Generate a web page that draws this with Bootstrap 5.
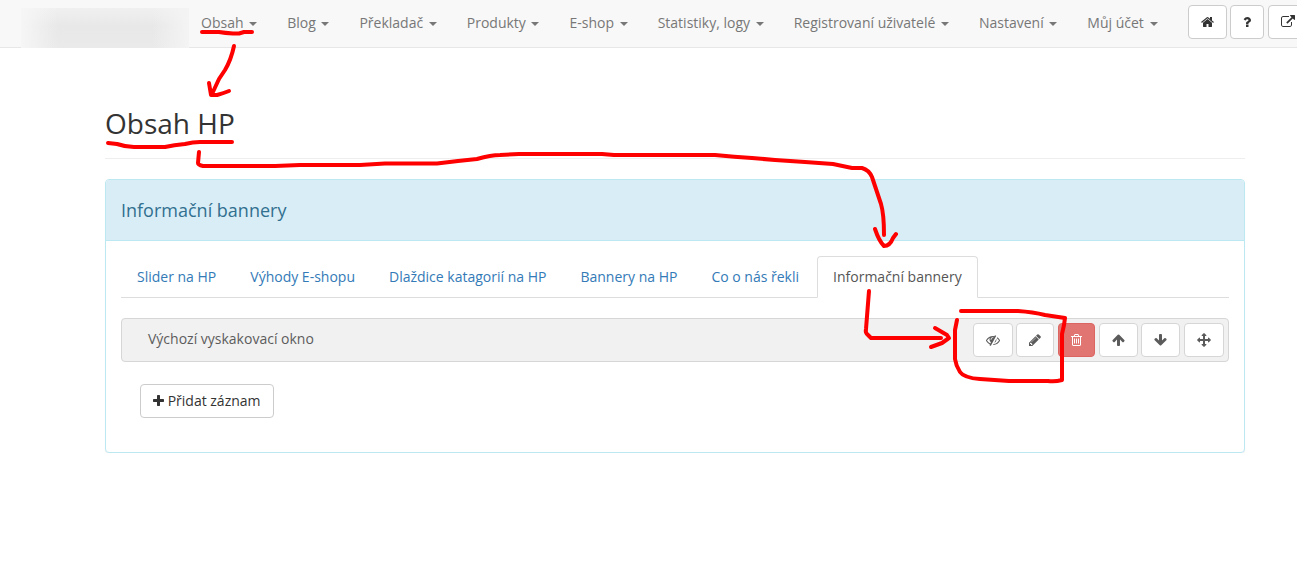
<!DOCTYPE html>
<html lang="cs">
<head>
<meta charset="utf-8">
<meta name="viewport" content="width=device-width, initial-scale=1">
<title>Obsah HP</title>
<link href="https://cdn.jsdelivr.net/npm/bootstrap@5.3.0/dist/css/bootstrap.min.css" rel="stylesheet">
<style>
body { font: 14px/20px "Open Sans", "Noto Sans", sans-serif; color: #333; background: #fff; overflow-x: hidden; }
.topbar { height: 48px; background: #f8f8f8; border-bottom: 1px solid #e7e7e7; padding-left: 21px; }
.logo-blur { width: 168px; height: 40px; margin: 8px -3px 0 0; background: linear-gradient(90deg, #f6f6f6, rgba(246,246,246,0) 22%, rgba(246,246,246,0) 78%, #f4f4f4), linear-gradient(#f0f0f0, #e8e8e8 45%, #eaeaea); }
.topbar .nav-link { color: #777; padding: 13px 15px 15px; line-height: 20px; white-space: nowrap; }
.topbar .dropdown-toggle::after { border-top: 4px solid; border-right: 4px solid transparent; border-left: 4px solid transparent; border-bottom: 0; margin-left: 2px; vertical-align: middle; }
.btn-line { --bs-btn-color: #333; --bs-btn-bg: #fff; --bs-btn-border-color: #ccc; --bs-btn-hover-bg: #e6e6e6; --bs-btn-hover-border-color: #adadad; }
.btn-del { --bs-btn-color: #fff; --bs-btn-bg: #d9534f; --bs-btn-border-color: #d43f3a; --bs-btn-hover-color: #fff; --bs-btn-hover-bg: #c9302c; }
.btn-line, .btn-del { --bs-btn-padding-x: 12px; --bs-btn-padding-y: 6px; --bs-btn-font-size: 14px; --bs-btn-line-height: 20px; --bs-btn-border-radius: 4px; }
.ico { height: 14px; fill: currentColor; vertical-align: -2px; }
.tools { padding: 5px 0 0 15px; white-space: nowrap; }
.page { padding: 0 52px 0 105px; }
.page-title { font-size: 28px; line-height: 32px; font-weight: 400; margin: 59px 0 20px; padding-bottom: 19px; border-bottom: 1px solid #eee; }
.panel { --bs-card-border-color: #bce8f1; --bs-card-border-radius: 4px; --bs-card-inner-border-radius: 3px; --bs-card-cap-bg: #d9edf7; --bs-card-cap-padding-x: 15px; --bs-card-cap-padding-y: 20px; box-shadow: 0 1px 1px rgba(0,0,0,.05); }
.panel-heading { color: #31708f; }
.panel-heading h2 { font-size: 18px; line-height: 20px; font-weight: 400; margin: 0; }
.panel-content { padding: 15px 15px 34px; }
.sections { --bs-nav-tabs-border-color: #ddd; --bs-nav-tabs-border-radius: 4px; --bs-nav-link-padding-x: 15px; --bs-nav-link-padding-y: 10px; --bs-nav-link-color: #337ab7; --bs-nav-tabs-link-active-color: #555; --bs-nav-tabs-link-active-border-color: #ddd #ddd #fff; column-gap: 2px; }
.record { margin-top: 20px; height: 44px; padding: 0 4px 0 26px; background: #eee; border: 1px solid #ccc; border-radius: 4px; opacity: .8; }
.record-name { padding-bottom: 3px; }
.add-row { padding: 22px 19px 0; }
.marks { left: 0; top: 0; fill: none; stroke: red; stroke-width: 4; stroke-linecap: round; stroke-linejoin: round; pointer-events: none; }
</style>
</head>
<body class="position-relative">
<svg width="0" height="0" class="d-none" aria-hidden="true">
  <symbol id="i-home" viewBox="64 0 1664 1792"><path d="M1472 992v480q0 26-19 45t-45 19h-384v-384h-256v384h-384q-26 0-45-19t-19-45v-480q0-1 .5-3t.5-3l575-474 575 474q1 2 1 6zm223-69l-62 74q-8 9-21 11h-3q-13 0-21-7l-692-577-692 577q-12 8-24 7-13-2-21-11l-62-74q-8-10-7-23.5t11-21.5l719-599q32-26 76-26t76 26l244 204v-195q0-14 9-23t23-9h192q14 0 23 9t9 23v408l219 182q10 8 11 21.5t-7 23.5z"/></symbol>
  <symbol id="i-question" viewBox="384 0 1024 1792"><path d="M1088 1256v240q0 16-12 28t-28 12h-240q-16 0-28-12t-12-28v-240q0-16 12-28t28-12h240q16 0 28 12t12 28zm316-600q0 54-15.5 101t-35 76.5-55 59.5-57.5 43.5-61 35.5q-41 23-68.5 65t-27.5 67q0 17-12 32.5t-28 15.5h-240q-15 0-25.5-18.5t-10.5-37.5v-45q0-83 65-156.5t143-108.5q59-27 84-56t25-76q0-42-46.5-74t-107.5-32q-65 0-108 29-35 25-107 115-13 16-31 16-12 0-25-8l-164-125q-13-10-15.5-25t5.5-28q160-266 464-266 80 0 161 31t146 83 106 127.5 41 158.5z"/></symbol>
  <symbol id="i-external" viewBox="0 0 1792 1792"><path d="M1408 928v320q0 119-84.5 203.5t-203.5 84.5h-832q-119 0-203.5-84.5t-84.5-203.5v-832q0-119 84.5-203.5t203.5-84.5h704q14 0 23 9t9 23v64q0 14-9 23t-23 9h-704q-66 0-113 47t-47 113v832q0 66 47 113t113 47h832q66 0 113-47t47-113v-320q0-14 9-23t23-9h64q14 0 23 9t9 23zm384-864v512q0 26-19 45t-45 19-45-19l-176-176-652 652q-10 10-23 10t-23-10l-114-114q-10-10-10-23t10-23l652-652-176-176q-19-19-19-45t19-45 45-19h512q26 0 45 19t19 45z"/></symbol>
  <symbol id="i-eye-slash" viewBox="0 0 1792 1792"><path d="M555 1335l78-141q-87-63-136-159t-49-203q0-121 61-225-229 117-381 353 167 258 427 375zm389-759q0-20-14-34t-34-14q-125 0-214.5 89.5t-89.5 214.5q0 20 14 34t34 14 34-14 14-34q0-86 61-147t147-61q20 0 34-14t14-34zm363-191q0 7-1 9-106 189-316 567t-315 566l-49 89q-10 16-28 16-12 0-134-70-16-10-16-28 0-12 44-87-143-65-263.5-173t-208.5-245q-20-31-20-69t20-69q153-235 380-371t496-136q89 0 180 17l54-97q10-16 28-16 5 0 18 6t31 15.5 33 18.5 31.5 18.5 19.5 11.5q16 10 16 27zm37 447q0 139-79 253.5t-209 164.5l280-502q8 45 8 84zm448 128q0 35-20 69-39 64-109 145-150 172-347.5 267t-419.5 95l74-132q212-18 392.5-137t301.5-307q-115-179-282-294l63-112q95 64 182.5 153t144.5 184q20 34 20 69z"/></symbol>
  <symbol id="i-pencil" viewBox="128 0 1536 1792"><path d="M491 1536l91-91-235-235-91 91v107h128v128h107zm523-928q0-22-22-22-10 0-17 7l-542 542q-7 7-7 17 0 22 22 22 10 0 17-7l542-542q7-7 7-17zm-54-192l416 416-832 832h-416v-416zm683 96q0 53-37 90l-166 166-416-416 166-165q36-38 90-38 53 0 91 38l235 234q37 39 37 91z"/></symbol>
  <symbol id="i-trash" viewBox="192 0 1408 1792"><path d="M704 736v576q0 14-9 23t-23 9h-64q-14 0-23-9t-9-23v-576q0-14 9-23t23-9h64q14 0 23 9t9 23zm256 0v576q0 14-9 23t-23 9h-64q-14 0-23-9t-9-23v-576q0-14 9-23t23-9h64q14 0 23 9t9 23zm256 0v576q0 14-9 23t-23 9h-64q-14 0-23-9t-9-23v-576q0-14 9-23t23-9h64q14 0 23 9t9 23zm128 724v-948h-896v948q0 22 7 40.5t14.5 27 10.5 8.5h832q3 0 10.5-8.5t14.5-27 7-40.5zm-672-1076h448l-48-117q-7-9-17-11h-317q-10 2-17 11zm928 32v64q0 14-9 23t-23 9h-96v948q0 83-47 143.5t-113 60.5h-832q-66 0-113-58.5t-47-141.5v-952h-96q-14 0-23-9t-9-23v-64q0-14 9-23t23-9h309l70-167q15-37 54-63t79-26h320q40 0 79 26t54 63l70 167h309q14 0 23 9t9 23z"/></symbol>
  <symbol id="i-up" viewBox="64 0 1664 1792"><path d="M1675 971q0 51-37 90l-75 75q-38 38-91 38-54 0-90-38l-294-293v704q0 52-37.5 84.5t-90.5 32.5h-128q-53 0-90.5-32.5t-37.5-84.5v-704l-294 293q-36 38-90 38t-90-38l-75-75q-38-38-38-90 0-53 38-91l651-651q35-37 90-37 54 0 91 37l651 651q37 39 37 91z"/></symbol>
  <symbol id="i-down" viewBox="64 0 1664 1792"><path d="M1675 832q0 53-37 90l-651 652q-39 37-91 37-53 0-90-37l-651-652q-38-36-38-90 0-53 38-91l74-75q39-37 91-37 53 0 90 37l294 294v-704q0-52 38-90t90-38h128q52 0 90 38t38 90v704l294-294q37-37 90-37 52 0 91 37l75 75q37 39 37 91z"/></symbol>
  <symbol id="i-move" viewBox="0 0 1792 1792"><path d="M1792 896q0 26-19 45l-256 256q-19 19-45 19t-45-19-19-45v-128h-384v384h128q26 0 45 19t19 45-19 45l-256 256q-19 19-45 19t-45-19l-256-256q-19-19-19-45t19-45 45-19h128v-384h-384v128q0 26-19 45t-45 19-45-19l-256-256q-19-19-19-45t19-45l256-256q19-19 45-19t45 19 19 45v128h384v-384h-128q-26 0-45-19t-19-45 19-45l256-256q19-19 45-19t45 19l256 256q19 19 19 45t-19 45-45 19h-128v384h384v-128q0-26 19-45t45-19 45 19l256 256q19 19 19 45z"/></symbol>
  <symbol id="i-plus" viewBox="192 0 1408 1792"><path d="M1600 736v192q0 40-28 68t-68 28h-416v416q0 40-28 68t-68 28h-192q-40 0-68-28t-28-68v-416h-416q-40 0-68-28t-28-68v-192q0-40 28-68t68-28h416v-416q0-40 28-68t68-28h192q40 0 68 28t28 68v416h416q40 0 68 28t28 68z"/></symbol>
</svg>

<header class="topbar d-flex">
  <div class="logo-blur flex-shrink-0"></div>
  <nav class="nav flex-nowrap flex-shrink-0">
    <a class="nav-link dropdown-toggle" href="#">Obsah </a>
    <a class="nav-link dropdown-toggle" href="#">Blog </a>
    <a class="nav-link dropdown-toggle" href="#">Překladač </a>
    <a class="nav-link dropdown-toggle" href="#">Produkty </a>
    <a class="nav-link dropdown-toggle" href="#">E-shop </a>
    <a class="nav-link dropdown-toggle" href="#">Statistiky, logy </a>
    <a class="nav-link dropdown-toggle" href="#">Registrovaní uživatelé </a>
    <a class="nav-link dropdown-toggle" href="#">Nastavení </a>
    <a class="nav-link dropdown-toggle" href="#">Můj účet </a>
  </nav>
  <div class="tools flex-shrink-0">
    <button type="button" class="btn btn-line" aria-label="Domů"><svg class="ico" width="13"><use href="#i-home"/></svg></button>
    <button type="button" class="btn btn-line" aria-label="Nápověda"><svg class="ico" width="8"><use href="#i-question"/></svg></button>
    <button type="button" class="btn btn-line" aria-label="Otevřít web"><svg class="ico" width="14"><use href="#i-external"/></svg></button>
  </div>
</header>

<main class="page">
  <h1 class="page-title">Obsah HP</h1>
  <section class="card panel">
    <div class="card-header panel-heading"><h2>Informační bannery</h2></div>
    <div class="panel-content">
      <ul class="nav nav-tabs sections">
        <li class="nav-item"><a class="nav-link" href="#">Slider na HP</a></li>
        <li class="nav-item"><a class="nav-link" href="#">Výhody E-shopu</a></li>
        <li class="nav-item"><a class="nav-link" href="#">Dlaždice katagorií na HP</a></li>
        <li class="nav-item"><a class="nav-link" href="#">Bannery na HP</a></li>
        <li class="nav-item"><a class="nav-link" href="#">Co o nás řekli</a></li>
        <li class="nav-item"><a class="nav-link active" aria-current="page" href="#">Informační bannery</a></li>
      </ul>
      <div class="record d-flex align-items-center justify-content-between">
        <span class="record-name">Výchozí vyskakovací okno</span>
        <div class="text-nowrap">
          <button type="button" class="btn btn-line" aria-label="Skrýt"><svg class="ico" width="14"><use href="#i-eye-slash"/></svg></button>
          <button type="button" class="btn btn-line" aria-label="Upravit"><svg class="ico" width="12"><use href="#i-pencil"/></svg></button>
          <button type="button" class="btn btn-del" aria-label="Smazat"><svg class="ico" width="11"><use href="#i-trash"/></svg></button>
          <button type="button" class="btn btn-line" aria-label="Nahoru"><svg class="ico" width="13"><use href="#i-up"/></svg></button>
          <button type="button" class="btn btn-line" aria-label="Dolů"><svg class="ico" width="13"><use href="#i-down"/></svg></button>
          <button type="button" class="btn btn-line" aria-label="Přesunout"><svg class="ico" width="14"><use href="#i-move"/></svg></button>
        </div>
      </div>
      <div class="add-row">
        <button type="button" class="btn btn-line"><svg class="ico" width="11"><use href="#i-plus"/></svg> Přidat záznam</button>
      </div>
    </div>
  </section>
</main>

<!-- Red pen: menu > page > tab > row actions -->
<svg class="marks position-absolute" width="1100" height="400" viewBox="0 0 1100 400" aria-hidden="true">
  <path d="M202 32H219Q225 33 233 33.500H239L244 32H252"/>
  <path d="M234 46Q231 60 225 70L219 79L212 94M209 83L211 95H217Q224 93 229 91"/>
  <path d="M108 143L117 144Q126 147 134 147H165Q174 145 185 144Q193 142 200 142H232"/>
  <path d="M199 152L198 163Q198 165 203 166H275L300 165H360L385 163.500H437L458 161L477 159Q491 155 500 155L519 154H602L614 155H715Q735 157 752 158L775 160L805 162L833 164L852 168H862Q869 170 872 177L876 189L881 204Q884 214 884 235M875 229Q879 241 884 246Q890 246 893 238L896 234"/>
  <path d="M869 291L866 329Q865 333 868 335L871 338H941M935 328L947 335L949 338L942 343L931 347"/>
  <path d="M961 311H1018Q1033 312 1045 315L1065 318L1064 325L1062 334V380Q1055 382 1048 381H1009L980 379Q964 378 960 372Q956 366 955 359V330L957 320"/>
</svg>
<script src="https://cdn.jsdelivr.net/npm/bootstrap@5.3.0/dist/js/bootstrap.bundle.min.js"></script>
</body>
</html>
